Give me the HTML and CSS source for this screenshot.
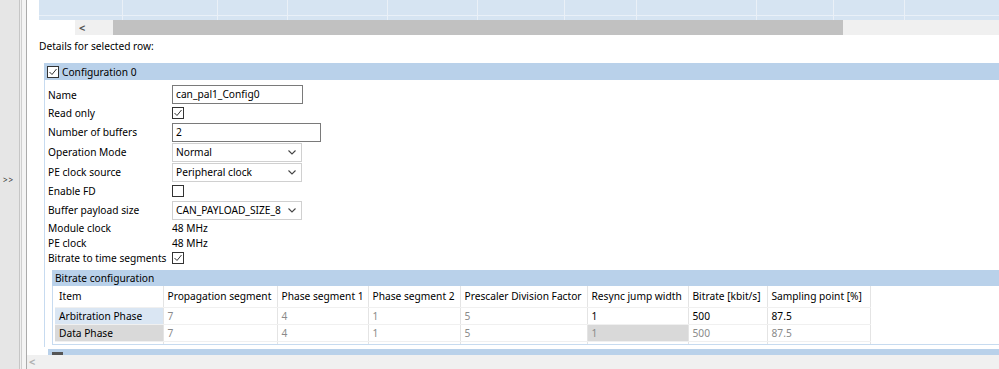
FILE: index.html
```html
<!DOCTYPE html>
<html>
<head>
<meta charset="utf-8">
<link rel="stylesheet" href="styles.css">
</head>
<body>
<div class="app">
  <div class="gutter"><span class="chev">&gt;&gt;</span></div>
  <div class="rail"></div>
  <div class="main">
    <div class="pane">
      <div class="topgrid">
        <div class="tc w84"></div><div class="tc w95"></div><div class="tc w70"></div><div class="tc w100"></div><div class="tc w90"></div><div class="tc w87"></div><div class="tc w72"></div><div class="tc w120"></div><div class="tc w77"></div><div class="tc w71"></div><div class="tc wrest"></div>
      </div>
      <div class="hscroll"><div class="sarrow">&lt;</div><div class="thumb"></div><div class="strack"></div></div>
      <div class="details">Details for selected row:</div>
      <div class="group">
        <div class="ghead">
          <span class="cb"><svg width="12" height="12" viewBox="0 0 12 12"><rect x="0.5" y="0.5" width="11" height="11" fill="#fff" stroke="#333"/><polyline points="2.5,6 5,8.5 9.5,3" fill="none" stroke="#333" stroke-width="1"/></svg></span>
          <span>Configuration 0</span>
        </div>
        <div class="gbody">
          <div class="row h19"><span class="lbl">Name</span><span class="input w130">can_pal1_Config0</span></div>
          <div class="row h18"><span class="lbl">Read only</span><span class="cb"><svg width="12" height="12" viewBox="0 0 12 12"><rect x="0.5" y="0.5" width="11" height="11" fill="#fff" stroke="#333"/><polyline points="2.5,6 5,8.5 9.5,3" fill="none" stroke="#333" stroke-width="1"/></svg></span></div>
          <div class="row h20"><span class="lbl">Number of buffers</span><span class="input w148">2</span></div>
          <div class="row h20"><span class="lbl">Operation Mode</span><span class="select">Normal<svg class="dd" width="8" height="5" viewBox="0 0 8 5"><polyline points="0.5,0.5 4,4 7.5,0.5" fill="none" stroke="#444" stroke-width="1.1"/></svg></span></div>
          <div class="row h20"><span class="lbl">PE clock source</span><span class="select">Peripheral clock<svg class="dd" width="8" height="5" viewBox="0 0 8 5"><polyline points="0.5,0.5 4,4 7.5,0.5" fill="none" stroke="#444" stroke-width="1.1"/></svg></span></div>
          <div class="row h18"><span class="lbl">Enable FD</span><span class="cb"><svg width="12" height="12" viewBox="0 0 12 12"><rect x="0.5" y="0.5" width="11" height="11" fill="#fff" stroke="#333"/></svg></span></div>
          <div class="row h20"><span class="lbl">Buffer payload size</span><span class="select">CAN_PAYLOAD_SIZE_8<svg class="dd" width="8" height="5" viewBox="0 0 8 5"><polyline points="0.5,0.5 4,4 7.5,0.5" fill="none" stroke="#444" stroke-width="1.1"/></svg></span></div>
          <div class="row h15"><span class="lbl">Module clock</span><span>48 MHz</span></div>
          <div class="row h15"><span class="lbl">PE clock</span><span>48 MHz</span></div>
          <div class="row h15"><span class="lbl">Bitrate to time segments</span><span class="cb"><svg width="12" height="12" viewBox="0 0 12 12"><rect x="0.5" y="0.5" width="11" height="11" fill="#fff" stroke="#333"/><polyline points="2.5,6 5,8.5 9.5,3" fill="none" stroke="#333" stroke-width="1"/></svg></span></div>

          <div class="sub">
            <div class="ghead subhead">Bitrate configuration</div>
            <div class="sbody">
              <table class="bt">
                <colgroup><col class="c1"><col class="c2"><col class="c3"><col class="c4"><col class="c5"><col class="c6"><col class="c7"><col class="c8"></colgroup>
                <thead>
                  <tr><th>Item</th><th>Propagation segment</th><th>Phase segment 1</th><th>Phase segment 2</th><th>Prescaler Division Factor</th><th>Resync jump width</th><th>Bitrate [kbit/s]</th><th>Sampling point [%]</th></tr>
                </thead>
                <tbody>
                  <tr><td class="arb">Arbitration Phase</td><td class="dis">7</td><td class="dis">4</td><td class="dis">1</td><td class="dis">5</td><td>1</td><td>500</td><td>87.5</td></tr>
                  <tr><td class="dp">Data Phase</td><td class="dis">7</td><td class="dis">4</td><td class="dis">1</td><td class="dis">5</td><td class="dis gray">1</td><td class="dis">500</td><td class="dis">87.5</td></tr>
                  <tr class="stub"><td></td><td></td><td></td><td></td><td></td><td></td><td></td><td></td></tr>
                </tbody>
              </table>
            </div>
          </div>
        </div>
      </div>
      <div class="group next">
        <div class="ghead nexthead"><span class="cbdark"></span></div>
      </div>
    </div>
    <div class="bscroll"><span class="barrow">&lt;</span></div>
  </div>
</div>
</body>
</html>
```
FILE: styles.css
```css
* { box-sizing: border-box; }
html, body { margin: 0; padding: 0; }
body {
  font-family: "Noto Sans", sans-serif;
  font-size: 10.2px;
  color: #000;
  background: #fff;
  overflow: hidden;
}
.app { display: flex; width: 999px; height: 369px; }
.gutter {
  width: 20px;
  background: #e6e6e6;
  border-right: 1px solid #c6c6c6;
  padding-top: 172px;
  padding-left: 3px;
}
.chev { font-size: 8px; color: #333; letter-spacing: 1px; }
.rail {
  width: 7px;
  background: linear-gradient(to right, #f0f0f0 0 1px, #cfcfcf 1px 2px, #f4f4f4 2px 6px, #ababab 6px 7px);
}
.main { flex: 1; display: flex; flex-direction: column; min-width: 0; }
.pane { flex: 1; overflow: hidden; }

.topgrid {
  margin-left: 12px;
  height: 20px;
  display: flex;
  background: linear-gradient(to bottom, #d6e4f2 0 15px, #e9f0f8 15px 16px, #d6e4f2 16px 20px);
}
.tc { height: 100%; border-right: 1px solid #eaf0f7; flex: none; }
.w84 { width: 84px; } .w95 { width: 95px; } .w70 { width: 70px; } .w100 { width: 100px; }
.w90 { width: 90px; } .w87 { width: 87px; } .w72 { width: 72px; } .w120 { width: 120px; }
.w77 { width: 77px; } .w71 { width: 71px; } .wrest { flex: 1; border-right: none; }

.hscroll { height: 15px; margin-left: 48px; display: flex; }
.sarrow { width: 38px; background: #f0f0f0; color: #555; font-size: 11px; line-height: 15px; padding-left: 4px; font-weight: bold; }
.thumb { width: 730px; background: #c1c1c1; }
.strack { flex: 1; background: #f0f0f0; }

.details { margin: 3px 0 0 12px; height: 16px; line-height: 16px; }

.group { margin: 9px 0 0 17px; }
.ghead {
  height: 17px;
  background: #b9d1ea;
  display: flex;
  align-items: center;
  padding-left: 3px;
}
.ghead .cb { margin-right: 3px; }
.cb { display: inline-flex; width: 12px; height: 12px; }
.gbody { border-left: 1px solid #c7dbf0; padding: 5px 0 2px 3px; }

.row { display: flex; align-items: center; }
.h15 { height: 15px; } .h18 { height: 18px; } .h19 { height: 19px; } .h20 { height: 20px; }
.lbl { width: 124px; flex: none; white-space: nowrap; }
.input {
  height: 19px;
  border: 1px solid #7a7a7a;
  padding-left: 3px;
  line-height: 17px;
  background: #fff;
}
.w130 { width: 131px; } .w148 { width: 149px; }
.select {
  width: 130px;
  height: 19px;
  border: 1px solid #d0d0d0;
  padding-left: 3px;
  line-height: 17px;
  display: flex;
  align-items: center;
  justify-content: space-between;
  padding-right: 5px;
  background: #fff;
}
.dd { flex: none; }

.sub { margin: 5px 0 0 4px; }
.subhead { height: 16px; padding-left: 3px; }
.sbody { border-left: 1px solid #c7dbf0; border-bottom: 1px solid #c7dbf0; padding-left: 2px; }
.bt { border-collapse: collapse; table-layout: fixed; width: 815px; }
.c1 { width: 108px; } .c2 { width: 114px; } .c3 { width: 91px; } .c4 { width: 92px; }
.c5 { width: 127px; } .c6 { width: 101px; } .c7 { width: 79px; } .c8 { width: 103px; }
.bt th, .bt td {
  padding: 0 4px;
  text-align: left;
  font-weight: normal;
  white-space: nowrap;
  overflow: hidden;
  border-right: 1px solid #e4e4e4;
  border-bottom: 1px solid #f0f0f0;
}
.bt th { height: 21px; }
.bt td { height: 17px; line-height: 16px; }
.bt .arb { background: #dae6f3; }
.bt .dp { background: #d9d9d9; }
.bt .gray { background: #d9d9d9; }
.bt .dis { color: #8a8a8a; }
.bt .stub td { height: 3px; border-bottom: none; }

.next { margin: 2px 0 0 21px; }
.nexthead { height: 8px; padding-left: 4px; align-items: flex-start; padding-top: 3px; }
.cbdark { width: 11px; height: 3px; background: #555; }

.bscroll { height: 14px; background: #f0f0f0; padding-left: 2px; }
.barrow { font-size: 11px; color: #b0b0b0; line-height: 14px; font-weight: bold; }
```
